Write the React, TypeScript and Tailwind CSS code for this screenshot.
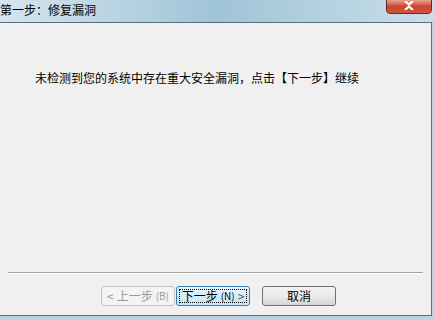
export default function App() {
  const font = { fontFamily: '"Noto Sans CJK SC", "Liberation Sans", sans-serif' };
  return (
    <div className="w-[434px] h-[320px] overflow-hidden flex flex-col bg-[#b9d3e2]" style={font}>
      {/* title bar */}
      <div className="h-[22px] flex items-start justify-between bg-gradient-to-r from-[#d6e5ee] via-[#9fc4d7] to-[#c9dfe9]">
        <span className="text-[12px] leading-[12px] mt-[4px] text-black">第一步：修复漏洞</span>
        <div className="w-[46px] h-[15px] mr-[2px] -mt-[1px] rounded-b-[4px] border border-[#6b2a20] bg-gradient-to-b from-[#e8a08f] via-[#c9442f] to-[#d0553c] flex items-center justify-center">
          <svg width="12" height="9" viewBox="0 0 12 9" className="mt-[-2px]">
            <path d="M2 0 L6 3.5 L10 0 M2 9 L6 5.5 L10 9" stroke="#fff" strokeWidth="2.2" fill="none" />
          </svg>
        </div>
      </div>
      {/* client */}
      <div className="h-[294px] mr-[2px] border-t border-r border-b border-[#5a6e7c] bg-[#f0f0f0] flex flex-col">
        <div className="h-[249px] pl-[35px] pt-[49px]">
          <p className="text-[12px] leading-[12px] text-black">未检测到您的系统中存在重大安全漏洞，点击【下一步】继续</p>
        </div>
        <div className="mx-[8px] h-[2px] border-t border-[#a0a0a0] border-b border-b-white" />
        <div className="flex items-start pt-[12px] pl-[101px]">
          <button className="w-[74px] h-[20px] rounded-[3px] border border-[#c3c3c3] bg-[#f4f4f4] text-[12px] leading-[12px] text-[#9a9a9a] flex items-center justify-center gap-[3px]">
            <span>&lt;</span><span>上一步</span><span className="text-[10px]">(B)</span>
          </button>
          <button className="ml-[1px] w-[74px] h-[20px] rounded-[3px] border border-[#3c7fb1] bg-gradient-to-b from-[#eaf6fd] to-[#bee6fd] p-[2px]">
            <div className="h-full w-full border border-dotted border-black flex items-center justify-center gap-[3px] text-[12px] leading-[12px] text-black">
              <span>下一步</span><span className="text-[10px]">(N)</span><span className="text-[#555]">&gt;</span>
            </div>
          </button>
          <button className="ml-[12px] w-[74px] h-[20px] rounded-[3px] border border-[#707070] bg-gradient-to-b from-[#f2f2f2] via-[#ebebeb] to-[#d6d6d6] text-[12px] leading-[12px] text-black flex items-center justify-center">
            取消
          </button>
        </div>
      </div>
    </div>
  );
}
